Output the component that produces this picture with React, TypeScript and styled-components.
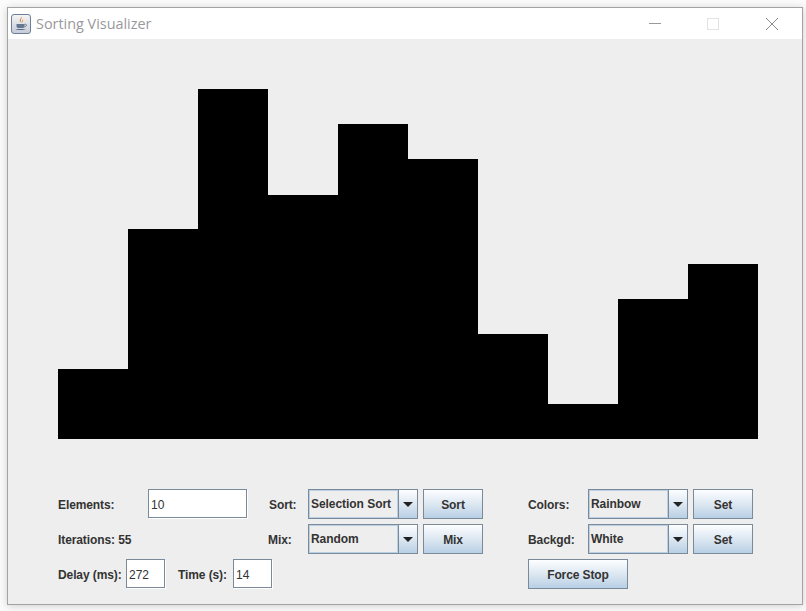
import React from 'react';
import styled, { createGlobalStyle } from 'styled-components';

const oceanBorder = '#7a8a99';
const oceanGradient = 'linear-gradient(180deg, #fdfeff 0%, #e9f0f7 30%, #d9e5f0 55%, #b8cfe5 100%)';

const GlobalStyle = createGlobalStyle`
  html, body {
    margin: 0;
    padding: 0;
    background: #fbfbfb;
  }
  * {
    box-sizing: border-box;
  }
`;

const Desktop = styled.div`
  width: 806px;
  height: 611px;
  padding: 7px 3px 6px 7px;
  overflow: hidden;
`;

const Window = styled.div`
  width: 796px;
  height: 598px;
  display: flex;
  flex-direction: column;
  border: 1px solid #a3a3a3;
  background: #eeeeee;
  box-shadow: 0 1px 8px rgba(0, 0, 0, 0.18);
  font-family: 'Liberation Sans', Arial, sans-serif;
  font-size: 12px;
  color: #333333;
`;

const TitleBar = styled.div`
  height: 31px;
  flex: none;
  display: flex;
  align-items: center;
  background: #ffffff;
  padding-left: 3px;
`;

const AppIcon = styled.svg`
  width: 20px;
  height: 20px;
  flex: none;
`;

const TitleText = styled.span`
  margin-left: 5px;
  font-family: 'Open Sans', sans-serif;
  font-size: 14.4px;
  color: #99999c;
  flex: 1;
`;

const CaptionButton = styled.div<{ $width: number }>`
  width: ${(p) => p.$width}px;
  height: 31px;
  display: flex;
  align-items: center;
  justify-content: center;
  svg {
    display: block;
  }
`;

const Chart = styled.div`
  height: 400px;
  flex: none;
  padding-left: 50px;
  display: flex;
  align-items: flex-end;
`;

const Bar = styled.div`
  width: 70px;
  background: #000000;
`;

const Controls = styled.div`
  margin-top: 50px;
  padding-left: 50px;
  display: flex;
`;

const Column = styled.div<{ $width: number }>`
  width: ${(p) => p.$width}px;
  flex: none;
  display: flex;
  flex-direction: column;
  gap: 5px;
`;

const Row = styled.div`
  height: 30px;
  display: flex;
  align-items: center;
`;

const Label = styled.span<{ $width?: number; $indent?: number }>`
  padding-top: 1px;
  font-weight: bold;
  letter-spacing: -0.1px;
  white-space: nowrap;
  ${(p) => (p.$width ? `width: ${p.$width}px; flex: none;` : '')}
  ${(p) => (p.$indent ? `margin-left: ${p.$indent}px;` : '')}
`;

const Field = styled.input<{ $width: number }>`
  width: ${(p) => p.$width}px;
  height: 29px;
  margin: 0 1px 1px 0;
  flex: none;
  padding: 2px 0 0 2px;
  border: 1px solid ${oceanBorder};
  border-radius: 0;
  box-shadow: 1px 1px 0 #ffffff;
  outline: none;
  background: #ffffff;
  font-family: 'Liberation Sans', Arial, sans-serif;
  font-size: 12px;
  color: #333333;
`;

const Combo = styled.div<{ $width: number }>`
  width: ${(p) => p.$width}px;
  height: 30px;
  flex: none;
  display: flex;
  border: 1px solid ${oceanBorder};
  background: #eeeeee;
`;

const ComboValue = styled.div`
  flex: 1;
  display: flex;
  align-items: center;
  padding: 0 0 0 1px;
  border: 1px solid #b8cfe5;
  font-weight: bold;
  letter-spacing: -0.05px;
  white-space: nowrap;
`;

const ComboArrow = styled.div`
  width: 19px;
  flex: none;
  display: flex;
  align-items: center;
  justify-content: center;
  border-left: 1px solid ${oceanBorder};
  background: ${oceanGradient};
  &::after {
    content: '';
    border-style: solid;
    border-width: 5px 5px 0 5px;
    border-color: #222222 transparent transparent transparent;
  }
`;

const PushButton = styled.button<{ $width: number; $gap?: number }>`
  width: ${(p) => p.$width}px;
  height: 30px;
  margin: 0 0 0 ${(p) => p.$gap ?? 0}px;
  flex: none;
  padding: 2px 0 0;
  border: 1px solid ${oceanBorder};
  border-radius: 0;
  background: ${oceanGradient};
  font-family: 'Liberation Sans', Arial, sans-serif;
  font-size: 12px;
  font-weight: bold;
  letter-spacing: -0.1px;
  color: #333333;
`;

const heights = [70, 210, 350, 244, 315, 280, 105, 35, 140, 175];

function JavaIcon() {
  return (
    <AppIcon viewBox="0 0 20 20">
      <defs>
        <linearGradient id="tile" x1="0" y1="0" x2="0" y2="1">
          <stop offset="0" stopColor="#f6f5f2" />
          <stop offset="1" stopColor="#c3cbd8" />
        </linearGradient>
      </defs>
      <rect x="0.5" y="0.5" width="19" height="19" rx="2.5" fill="url(#tile)" stroke="#6d7f96" />
      <path d="M10.5 2.5c1.5 1.6-1.8 2.6-.6 4.4.5.7.6 1.2.2 1.8-.1-1-2-1.6-1.2-3.2.5-1 1.8-1.6 1.6-3z" fill="#d9691f" />
      <path d="M12.5 5.2c-1.2.7-1.6 1.3-1.2 2.2.2.5.1.9-.1 1.3 1.2-.7 1-1.5.7-2.1-.2-.5 0-.9.6-1.4z" fill="#e58a36" />
      <path d="M5.5 10h8v2.2c0 1.2-1 1.8-2 1.8h-4c-1 0-2-.6-2-1.8z" fill="#66788f" />
      <path d="M13.5 10.3h1.2c1.2 0 1.2 2.2-1.4 2.6" fill="none" stroke="#66788f" />
      <path d="M4.5 15h10c-1 1.3-9 1.3-10 0z" fill="#566a84" />
    </AppIcon>
  );
}

export default function App() {
  return (
    <>
      <GlobalStyle />
      <Desktop>
        <Window>
          <TitleBar>
            <JavaIcon />
            <TitleText>Sorting Visualizer</TitleText>
            <CaptionButton $width={58}>
              <svg width="12" height="12" viewBox="0 0 12 12">
                <path d="M0 5.5h12" stroke="#9a9a9a" fill="none" />
              </svg>
            </CaptionButton>
            <CaptionButton $width={58}>
              <svg width="12" height="12" viewBox="0 0 12 12">
                <rect x="0.5" y="0.5" width="11" height="11" stroke="#e3e3e3" fill="none" />
              </svg>
            </CaptionButton>
            <CaptionButton $width={60}>
              <svg width="12" height="12" viewBox="0 0 12 12">
                <path d="M0 0l12 12M12 0L0 12" stroke="#8c8c8c" fill="none" />
              </svg>
            </CaptionButton>
          </TitleBar>
          <Chart>
            {heights.map((h, i) => (
              <Bar key={i} style={{ height: h }} />
            ))}
          </Chart>
          <Controls>
            <Column $width={211}>
              <Row>
                <Label $width={90}>Elements:</Label>
                <Field $width={99} defaultValue="10" readOnly />
              </Row>
              <Row>
                <Label>Iterations: 55</Label>
              </Row>
              <Row>
                <Label $width={68}>Delay (ms):</Label>
                <Field $width={39} defaultValue="272" readOnly />
                <Label $width={55} $indent={12}>Time (s):</Label>
                <Field $width={39} defaultValue="14" readOnly />
              </Row>
            </Column>
            <Column $width={259}>
              <Row>
                <Label $width={39}>Sort:</Label>
                <Combo $width={110}>
                  <ComboValue>Selection Sort</ComboValue>
                  <ComboArrow />
                </Combo>
                <PushButton $width={60} $gap={5}>Sort</PushButton>
              </Row>
              <Row>
                <Label $width={40} $indent={-1}>Mix:</Label>
                <Combo $width={110}>
                  <ComboValue>Random</ComboValue>
                  <ComboArrow />
                </Combo>
                <PushButton $width={60} $gap={5}>Mix</PushButton>
              </Row>
            </Column>
            <Column $width={226}>
              <Row>
                <Label $width={60}>Colors:</Label>
                <Combo $width={100}>
                  <ComboValue>Rainbow</ComboValue>
                  <ComboArrow />
                </Combo>
                <PushButton $width={60} $gap={5}>Set</PushButton>
              </Row>
              <Row>
                <Label $width={60}>Backgd:</Label>
                <Combo $width={100}>
                  <ComboValue>White</ComboValue>
                  <ComboArrow />
                </Combo>
                <PushButton $width={60} $gap={5}>Set</PushButton>
              </Row>
              <Row>
                <PushButton $width={100}>Force Stop</PushButton>
              </Row>
            </Column>
          </Controls>
        </Window>
      </Desktop>
    </>
  );
}
